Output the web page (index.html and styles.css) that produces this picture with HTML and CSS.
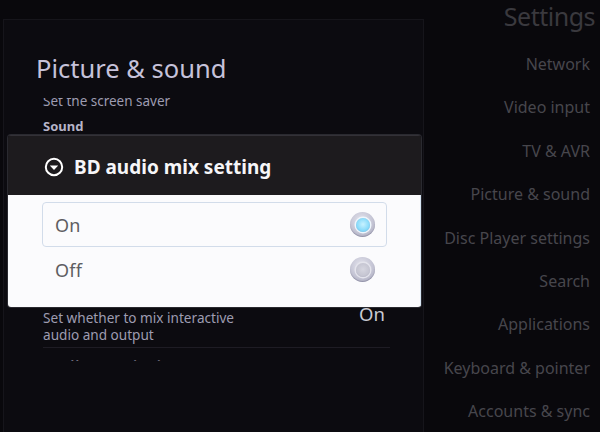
FILE: index.html
```html
<!DOCTYPE html>
<html>
<head>
<meta charset="utf-8">
<link rel="stylesheet" href="styles.css">
</head>
<body>
<div class="screen">
  <section class="panel">
    <h1 class="panel-title">Picture &amp; sound</h1>
    <div class="list">
      <div class="list-inner">
        <div class="summary first">Set the screen saver</div>
        <div class="category">Sound</div>
        <div class="pref">
          <div class="pref-text">
            <div class="pref-title">Audio output</div>
            <div class="summary">Select the audio output format<br>for connected devices</div>
          </div>
        </div>
        <div class="pref">
          <div class="pref-text">
            <div class="pref-title">Dolby Digital</div>
            <div class="summary">Select the Dolby Digital output<br>format</div>
          </div>
        </div>
        <div class="pref">
          <div class="pref-text">
            <div class="pref-title">BD audio mix setting</div>
            <div class="summary">Set whether to mix interactive<br>audio and output</div>
          </div>
          <div class="pref-value">On</div>
        </div>
        <div class="pref next">
          <div class="pref-text">
            <div class="pref-title">Dolby D Limit</div>
            <div class="summary">Set the dynamic range</div>
          </div>
        </div>
      </div>
    </div>
  </section>
  <nav class="nav">
    <div class="nav-head">Settings</div>
    <ul class="nav-list">
      <li>Network</li>
      <li>Video input</li>
      <li>TV &amp; AVR</li>
      <li>Picture &amp; sound</li>
      <li>Disc Player settings</li>
      <li>Search</li>
      <li>Applications</li>
      <li>Keyboard &amp; pointer</li>
      <li>Accounts &amp; sync</li>
    </ul>
  </nav>

  <div class="dialog">
    <div class="dialog-head">
      <svg class="dialog-icon" width="20" height="20" viewBox="0 0 20 20">
        <circle cx="10" cy="10" r="8.2" fill="none" stroke="#ffffff" stroke-width="2"/>
        <path d="M5.8 8.4 H14.2 L10 13 Z" fill="#ffffff"/>
      </svg>
      <span class="dialog-title">BD audio mix setting</span>
    </div>
    <div class="dialog-body">
      <div class="option selected">
        <span class="option-label">On</span>
        <span class="radio checked"></span>
      </div>
      <div class="option">
        <span class="option-label">Off</span>
        <span class="radio"></span>
      </div>
    </div>
  </div>
</div>
</body>
</html>
```

FILE: styles.css
```css
* { box-sizing: border-box; }
html, body { margin: 0; padding: 0; }
body {
  background: #09080c;
  font-family: "Noto Sans", "Open Sans", sans-serif;
}
.screen {
  position: relative;
  width: 600px;
  height: 432px;
  overflow: hidden;
  display: flex;
  background: #09080c;
}

/* left panel */
.panel {
  width: 421px;
  margin: 19px 0 0 3px;
  padding: 33px 33px 0 39px;
  background: #0c0b10;
  border: 1px solid #16151b;
  border-bottom: none;
  display: flex;
  flex-direction: column;
}
.panel-title {
  margin: 0 0 0 -7px;
  font-size: 25.5px;
  line-height: 30px;
  font-weight: 400;
  color: #c6c2da;
  white-space: nowrap;
}
.list {
  margin-top: 15px;
  height: 263px;
  overflow: hidden;
}
.list-inner { margin-top: -5px; }
.summary {
  font-size: 13.6px;
  line-height: 17px;
  color: #9e9cb0;
  margin-top: 3px;
}
.summary.first {
  font-size: 13.5px;
  line-height: 16px;
  margin-top: 0;
}
.category {
  margin-top: 9px;
  padding-bottom: 4px;
  font-size: 13px;
  line-height: 16px;
  font-weight: 700;
  color: #b6b4c8;
}
.pref {
  display: flex;
  align-items: center;
  padding: 6px 0 4px;
  border-bottom: 1px solid #1e1c24;
}
.pref.next { padding-top: 9px; }
.pref.next .pref-title { color: #6e6c7c; }
.pref-text { flex: 1; }
.pref-title {
  font-size: 20px;
  line-height: 22px;
  color: #d4d2e0;
}
.pref-value {
  font-size: 18.5px;
  line-height: 22px;
  color: #cacad2;
  margin-right: 5px;
}

/* right nav */
.nav {
  flex: 1;
  padding-right: 10px;
  text-align: right;
  white-space: nowrap;
}
.nav-head {
  margin: 1px -5px 0 0;
  font-size: 25px;
  line-height: 30px;
  letter-spacing: -0.5px;
  color: #3a393e;
}
.nav-list {
  list-style: none;
  margin: 12px 0 0;
  padding: 0;
}
.nav-list li {
  font-size: 16px;
  line-height: 43.4px;
  color: #47464c;
}

/* dialog */
.dialog {
  position: absolute;
  left: 8px;
  top: 135px;
  width: 413px;
  height: 172px;
  border-radius: 3px;
  overflow: hidden;
  box-shadow: 0 0 0 1px #2a2a30;
}
.dialog-head {
  height: 60px;
  display: flex;
  align-items: center;
  padding: 2px 0 0 36px;
  background: #1d1b1e;
  border-top: 1px solid #333137;
}
.dialog-icon { flex: none; }
.dialog-title {
  margin-left: 10px;
  font-size: 19px;
  font-weight: 700;
  color: #f6f6f8;
  white-space: nowrap;
}
.dialog-body {
  height: 112px;
  background: #fbfbfd;
  padding: 7px 33px 0 34px;
  border-right: 1px solid #d8e6f4;
}
.option {
  height: 45px;
  display: flex;
  align-items: center;
  justify-content: space-between;
  padding: 0 11px 0 12px;
  border: 1px solid transparent;
  border-radius: 4px;
}
.option.selected {
  border-color: #d2dcea;
}
.option-label {
  font-size: 18px;
  color: #5e5e62;
  letter-spacing: 0.3px;
}
.radio {
  position: relative;
  width: 25px;
  height: 25px;
  border-radius: 50%;
  background: radial-gradient(circle at 45% 35%, #e6e6ef 0%, #c4c4d4 55%, #a6a6ba 100%);
  box-shadow: inset 0 -1px 1px rgba(80, 80, 110, 0.35);
}
.radio::after {
  content: "";
  position: absolute;
  left: 5.5px;
  top: 5.5px;
  width: 14px;
  height: 14px;
  border-radius: 50%;
  background: radial-gradient(circle at 50% 45%, #d6d6e0 0%, #c6c6d2 60%, #a4a4b8 100%);
  box-shadow: 0 0 0 1.5px #e4e4ec;
}
.radio.checked::after {
  background: radial-gradient(circle at 50% 45%, #c8f2ff 0%, #8cdcfa 55%, #5ab6e6 100%);
  box-shadow: 0 0 0 1.5px #eef6fc;
}
```
